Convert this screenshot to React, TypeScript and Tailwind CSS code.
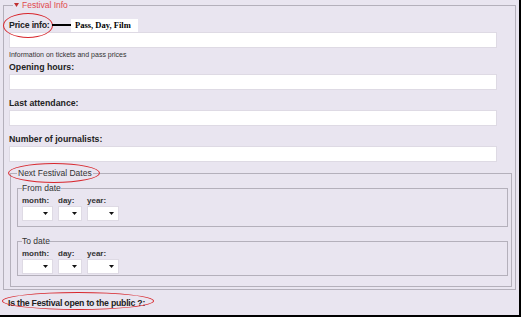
import React from 'react';

const TextBox = () => <div className="h-4 w-[488px] bg-white border border-[#dedae4]" />;

const Select = ({ w }: { w: string }) => (
  <div className={`${w} h-[15px] bg-white border border-[#dedae4] flex items-center justify-end pr-[4px]`}>
    <svg width="5" height="3" viewBox="0 0 5 3">
      <path d="M0 0h5L2.5 3z" fill="#111" />
    </svg>
  </div>
);

const DateGroup = ({ title, className }: { title: string; className: string }) => (
  <fieldset className={`border border-[#b4b0bb] ${className}`}>
    <legend className="ml-[4px] text-[8.5px] leading-[9px] text-[#333]">{title}</legend>
    <div className="flex gap-[5px] pl-[4px] mt-[2px]">
      <div className="flex flex-col">
        <span className="text-[8px] leading-[11px] font-bold text-[#333]">month:</span>
        <Select w="w-[31px]" />
      </div>
      <div className="flex flex-col">
        <span className="text-[8px] leading-[11px] font-bold text-[#333]">day:</span>
        <Select w="w-[24px]" />
      </div>
      <div className="flex flex-col">
        <span className="text-[8px] leading-[11px] font-bold text-[#333]">year:</span>
        <Select w="w-[32px]" />
      </div>
    </div>
  </fieldset>
);

export default function App() {
  return (
    <div className="relative w-[521px] h-[317px] overflow-hidden bg-[#e9e5f0] border-r-2 border-b-2 border-black font-['Liberation_Sans',Arial,sans-serif] text-[#222]">
      <fieldset className="ml-[3px] mr-[3px] border border-[#b4b0bb] pl-[5px] pr-[3px] pb-[2px]">
        <legend className="ml-[4px] px-[1px] text-[8.5px] leading-[10px] text-[#e0494c] flex items-center gap-[3px]">
          <svg width="5" height="4" viewBox="0 0 5 4">
            <path d="M0 0h5L2.5 4z" fill="#c03030" />
          </svg>
          Festival Info
        </legend>

        <div className="pt-[10px] text-[8.75px] leading-[11px] font-bold tracking-[-0.2px]">Price info:</div>
        <div className="mt-[1px]">
          <TextBox />
        </div>
        <div className="mt-[2px] text-[7px] leading-[9px] text-[#333]">Information on tickets and pass prices</div>

        <div className="mt-[3px] text-[8.75px] leading-[11px] font-bold">Opening hours:</div>
        <div className="mt-[1px]">
          <TextBox />
        </div>

        <div className="mt-[8px] text-[8.75px] leading-[11px] font-bold">Last attendance:</div>
        <div className="mt-[1px]">
          <TextBox />
        </div>

        <div className="mt-[8px] text-[8.75px] leading-[11px] font-bold">Number of journalists:</div>
        <div className="mt-[1px]">
          <TextBox />
        </div>

        <fieldset className="mt-[6px] ml-[1px] border border-[#b4b0bb] pl-[6px] pr-[3px] pb-[10px]">
          <legend className="text-[8.5px] leading-[10px] text-[#333] px-[1px]">Next Festival Dates</legend>
          <DateGroup title="From date" className="mt-[6px] pb-[5px]" />
          <DateGroup title="To date" className="mt-[10px] pb-[1px]" />
        </fieldset>
      </fieldset>

      <div className="mt-[8px] pl-[8px] text-[8.75px] leading-[11px] font-bold tracking-[-0.25px]">Is the Festival open to the public ?:</div>

      {/* annotations drawn over the form */}
      <div className="absolute left-[3px] top-[13px] w-[50px] h-[25px] rounded-[50%] border-[1.5px] border-[#d8262c]" />
      <div className="absolute left-[52px] top-[24px] w-[21px] h-[2px] bg-black" />
      <div className="absolute left-[71px] top-[19px] w-[67px] h-[13px] bg-white pl-[4px] font-['Liberation_Serif',serif] font-bold text-[8.5px] leading-[13px] text-black">
        Pass, Day, Film
      </div>
      <div className="absolute left-[8px] top-[163px] w-[92px] h-[20px] rounded-[50%] border-[1.5px] border-[#d8262c]" />
      <div className="absolute left-[2px] top-[292px] w-[152px] h-[18px] rounded-[50%] border-[1.5px] border-[#d8262c]" />
    </div>
  );
}
